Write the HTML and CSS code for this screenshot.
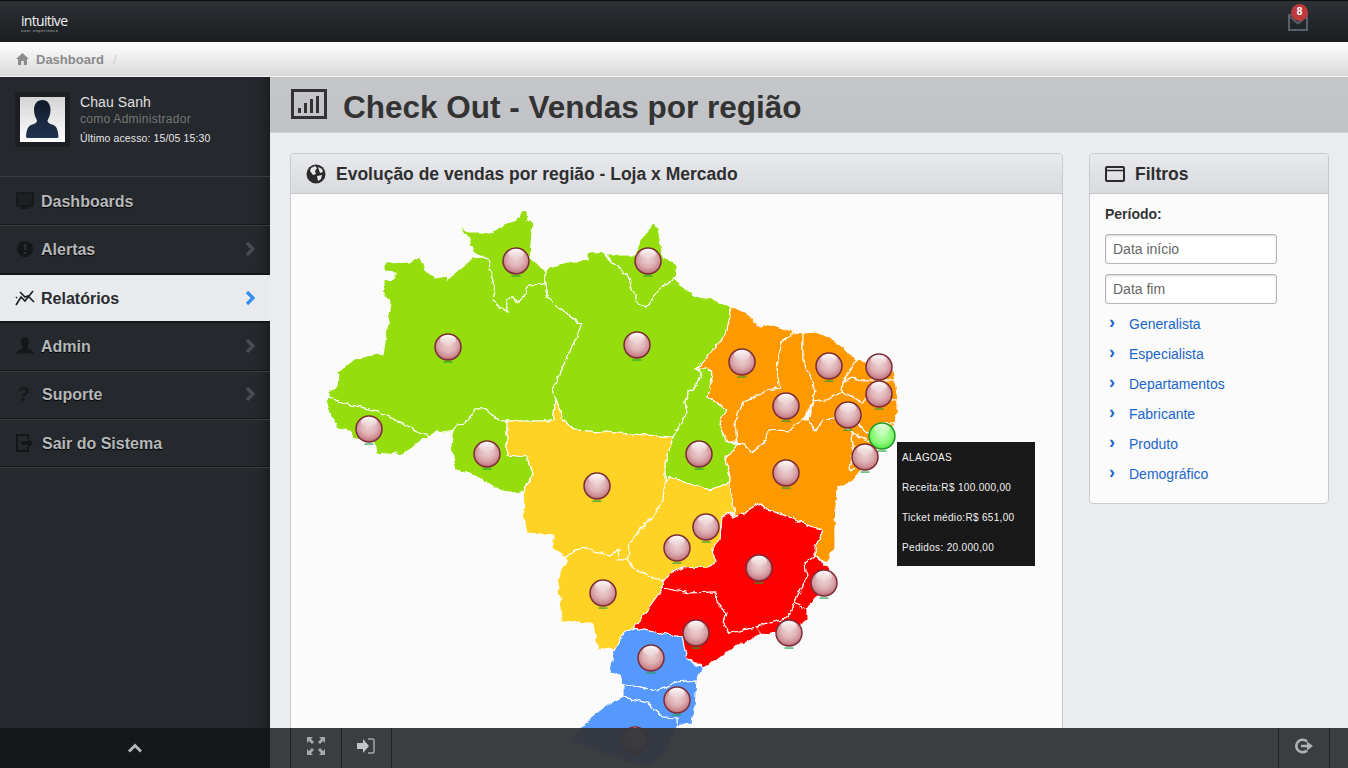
FILE: index.html
```html
<!DOCTYPE html>
<html lang="pt-BR">
<head>
<meta charset="utf-8">
<title>Check Out - Vendas por região</title>
<link rel="stylesheet" href="styles.css">
</head>
<body>
<svg class="defs" width="0" height="0" aria-hidden="true">
  <defs>
    <filter id="rough" x="-5%" y="-5%" width="110%" height="110%">
      <feTurbulence type="fractalNoise" baseFrequency=".14" numOctaves="2" seed="4" result="n"/>
      <feDisplacementMap in="SourceGraphic" in2="n" scale="5" xChannelSelector="R" yChannelSelector="G"/>
    </filter>
    <radialGradient id="ballRed" cx="50%" cy="40%" r="62%">
      <stop offset="0" stop-color="#ecd2d4"/>
      <stop offset=".5" stop-color="#dfb2b6"/>
      <stop offset=".82" stop-color="#cb868d"/>
      <stop offset="1" stop-color="#a84c56"/>
    </radialGradient>
    <radialGradient id="ballGreen" cx="50%" cy="42%" r="60%">
      <stop offset="0" stop-color="#c8ffc0"/>
      <stop offset=".6" stop-color="#8cfa78"/>
      <stop offset="1" stop-color="#4fe040"/>
    </radialGradient>
    <linearGradient id="gloss" x1="0" y1="0" x2="0" y2="1">
      <stop offset="0" stop-color="#fff" stop-opacity=".98"/>
      <stop offset="1" stop-color="#fff" stop-opacity=".05"/>
    </linearGradient>
    <linearGradient id="avatarBg" x1="0" y1="0" x2="0" y2="1">
      <stop offset="0" stop-color="#d4d4d4"/>
      <stop offset="1" stop-color="#ffffff"/>
    </linearGradient>
    <linearGradient id="bust" x1="0" y1="0" x2="0" y2="1">
      <stop offset="0" stop-color="#0f1a29"/>
      <stop offset="1" stop-color="#1f3350"/>
    </linearGradient>
    <g id="m">
      <rect x="-4.500" y="14.500" width="9" height="1.100" fill="#1f9e3a"/>
      <circle r="13" fill="url(#ballRed)" stroke="#7a2c38" stroke-width="1.500"/>
      <ellipse cy="-7" rx="8" ry="5.200" fill="url(#gloss)"/>
    </g>
    <g id="g">
      <rect x="-4.500" y="14.500" width="9" height="1.100" fill="#1f9e3a"/>
      <circle r="13" fill="url(#ballGreen)" stroke="#1f9a2a" stroke-width="1.500"/>
      <ellipse cy="-7" rx="8" ry="5.200" fill="url(#gloss)" opacity=".8"/>
    </g>
  </defs>
</svg>

<header class="topbar">
  <div class="logo">
    <span class="logo-name">intuitive</span>
    <span class="logo-sub">user experience</span>
  </div>
  <div class="mail">
    <svg class="mail-icon" width="20" height="17" viewBox="0 0 20 17"><path d="M1 1h18v15H1z M1 2l9 7.500 9-7.500" fill="none" stroke="#56616b" stroke-width="2"/></svg>
    <span class="badge">8</span>
  </div>
</header>

<nav class="crumbs">
  <svg width="13" height="12" viewBox="0 0 13 12"><path d="M6.500 0L0 6h2v6h3.200V8h2.600v4H11V6h2z" fill="#8b8b8b"/></svg>
  <span class="crumb">Dashboard</span>
  <span class="crumb-sep">/</span>
</nav>

<div class="shell">
  <aside class="sidebar">
    <div class="profile">
      <div class="avatar">
        <svg width="45" height="45" viewBox="0 0 45 45">
          <rect width="45" height="45" fill="url(#avatarBg)"/>
          <path d="M22.500 3c5 0 8 4 8 10 0 5-2 8-3 10.500 0 2.500 2.500 3.500 6 4.500 3.500 1.500 4.500 6 5 11.500 0 1-1 1.500-3 1.500H9c-2 0-3-.5-3-1.500.5-5.500 1.500-10 5-11.500 3.500-1 6-2 6-4.500-1-2.500-3-5.500-3-10.500 0-6 3-10 8.500-10z" fill="url(#bust)"/>
        </svg>
      </div>
      <div class="who">
        <div class="who-name">Chau Sanh</div>
        <div class="who-role">como Administrador</div>
        <div class="who-last">Último acesso: 15/05 15:30</div>
      </div>
    </div>
    <ul class="menu">
      <li class="item">
        <svg class="ico" width="18" height="18" viewBox="0 0 18 18"><path d="M1 1h16v13H1z" fill="#1d1f22" stroke="#141618" stroke-width="1.500"/><path d="M4 16h10" stroke="#17191b" stroke-width="2"/></svg>
        <span class="label">Dashboards</span>
      </li>
      <li class="item">
        <svg class="ico" width="18" height="18" viewBox="0 0 18 18"><circle cx="9" cy="9" r="8" fill="#141618"/><path d="M9 4v6M9 12v2" stroke="#2c2f32" stroke-width="2.500"/></svg>
        <span class="label">Alertas</span>
        <svg class="chev" width="11" height="16" viewBox="0 0 11 16"><path d="M2 2l6 6-6 6" fill="none" stroke="#4a4d51" stroke-width="3.200"/></svg>
      </li>
      <li class="item active">
        <svg class="ico" width="20" height="18" viewBox="0 0 20 18"><path d="M1 16l5-8 4 4 8-10M1 9l1-1M5 3l5 5 3-1 6 6" fill="none" stroke="#1d1f22" stroke-width="1.600"/></svg>
        <span class="label">Relatórios</span>
        <svg class="chev" width="11" height="16" viewBox="0 0 11 16"><path d="M2 2l6 6-6 6" fill="none" stroke="#2f8ff0" stroke-width="3.200"/></svg>
      </li>
      <li class="item">
        <svg class="ico" width="20" height="18" viewBox="0 0 20 18"><path d="M10 0c3 0 4 2.500 4 5 0 3-1.500 4.500-2 6 1 1.500 6 2 6.500 5.500H1.500C2 13 7 12.500 8 11c-.5-1.500-2-3-2-6 0-2.500 1-5 4-5z" fill="#141618"/></svg>
        <span class="label">Admin</span>
        <svg class="chev" width="11" height="16" viewBox="0 0 11 16"><path d="M2 2l6 6-6 6" fill="none" stroke="#4a4d51" stroke-width="3.200"/></svg>
      </li>
      <li class="item">
        <span class="ico ico-q">?</span>
        <span class="label label-shift">Suporte</span>
        <svg class="chev" width="11" height="16" viewBox="0 0 11 16"><path d="M2 2l6 6-6 6" fill="none" stroke="#4a4d51" stroke-width="3.200"/></svg>
      </li>
      <li class="item">
        <svg class="ico" width="18" height="18" viewBox="0 0 18 18"><path d="M12 5V1H1v16h11v-4" fill="none" stroke="#141618" stroke-width="2"/><path d="M5 7h7V4l5 5-5 5v-3H5z" fill="#141618"/></svg>
        <span class="label label-shift">Sair do Sistema</span>
      </li>
    </ul>
  </aside>

  <main class="main">
    <div class="title-band">
      <svg class="title-icon" width="36" height="30" viewBox="0 0 36 30"><rect x="1.500" y="1.500" width="33" height="27" fill="none" stroke="#333" stroke-width="3"/><path d="M7 19h3v5H7zM13 14h3v10h-3zM19 10h3v14h-3zM25 7h3v17h-3z" fill="#333"/></svg>
      <h1 class="title">Check Out - Vendas por região</h1>
    </div>
    <div class="content">
      <section class="panel panel-map">
        <div class="panel-head">
          <svg class="panel-icon" width="20" height="20" viewBox="0 0 20 20"><circle cx="10" cy="10" r="9.500" fill="#2b2b2b"/><path d="M5 4l4-2 2 2-2 3 1 3-3 1-3-4zM12 3l4 2 1 3-3 1zM11 12l5-1-1 4-3 2z" fill="#e8e8ea"/></svg>
          <h2 class="panel-title">Evolução de vendas por região - Loja x Mercado</h2>
        </div>
        <div class="stage">
          <svg class="map" width="771" height="574" viewBox="291 194 771 574">
            <g filter="url(#rough)">
            <g class="st-green">
              <polygon points="459,225 470,232 482,232 490,233 500,227 513,222 522,212 527,211 528,220 533,224 532,233 530,257 537,263 545,271 545,284 529,285 524,297 518,302 512,297 507,300 507,312 500,308 493,300 495,290 490,270 488,259 482,257 473,252 468,237"/>
              <polygon points="385,263 410,262 420,257 425,270 435,278 447,276 448,279 460,268 473,258 482,257 488,259 490,270 495,290 493,300 500,308 507,312 507,300 512,297 518,302 524,297 529,285 545,284 547,295 557,307 567,313 578,322 583,323 552,390 556,399 553,421 507,421 500,420 493,417 485,409 475,409 470,418 465,424 457,425 453,430 443,432 435,431 430,437 377,411 343,403 328,397 328,392 337,387 338,372 353,360 377,353 383,355 391,303 383,292 383,280 395,279 395,272 385,271"/>
              <polygon points="326,402 328,397 343,403 377,411 430,437 417,443 403,455 390,453 376,454 374,443 353,438 350,431 338,429 330,413"/>
              <polygon points="452,433 453,430 457,425 465,424 470,418 475,409 485,409 493,417 500,420 507,421 507,455 528,457 528,460 532,475 523,492 513,493 500,490 475,476 456,470 453,457 451,447"/>
              <polygon points="546,270 557,265 567,262 588,260 588,253 603,252 605,255 615,265 628,275 630,283 638,303 647,307 652,300 660,288 673,278 680,285 698,297 713,299 732,307 727,330 720,342 700,365 695,368 702,373 698,383 688,393 685,402 687,413 673,437 575,430 563,420 556,399 552,390 583,323 578,322 567,313 557,307 547,295 545,284"/>
              <polygon points="605,255 615,255 635,255 640,240 654,223 658,228 663,257 677,265 675,278 660,288 652,300 647,307 638,303 630,283 628,275 615,265"/>
              <polygon points="695,368 707,368 713,373 708,397 727,410 719,423 728,442 737,445 726,458 730,477 730,483 710,490 687,483 670,477 665,482 665,463 673,437 687,413 685,402 688,393 698,383 702,373"/>
            </g>
            <g class="st-yellow">
              <polygon points="507,421 553,421 556,399 563,420 575,430 673,437 665,463 665,482 663,500 652,518 640,530 630,542 628,560 618,560 620,550 610,555 600,553 587,548 575,550 565,558 553,548 553,535 527,533 523,518 525,503 522,495 532,475 528,460 528,457 507,455"/>
              <polygon points="670,477 687,483 710,490 730,483 735,515 727,512 722,517 720,540 713,548 715,563 707,567 683,568 670,573 663,582 633,568 628,560 630,542 640,530 652,518 663,500 665,482"/>
              <polygon points="565,558 575,550 587,548 600,553 610,555 620,550 618,560 628,560 633,568 663,582 660,592 647,610 633,628 623,633 615,652 610,648 598,650 593,625 580,622 562,622 560,597 557,592 560,573 567,560"/>
            </g>
            <g class="st-orange">
              <polygon points="732,307 747,313 760,327 770,324 795,332 782,342 778,360 777,373 780,388 768,390 743,403 735,422 737,442 728,442 719,423 727,410 708,397 713,373 707,368 695,368 700,365 720,342 727,330"/>
              <polygon points="795,332 803,333 803,360 815,390 812,403 803,420 787,432 768,430 767,440 752,453 742,443 737,442 735,422 743,403 768,390 780,388 777,373 778,360 782,342"/>
              <polygon points="803,333 817,332 833,340 847,350 857,360 843,382 842,400 827,400 813,402 815,390 803,360"/>
              <polygon points="857,360 893,370 895,380 863,380 850,378 843,382"/>
              <polygon points="843,382 850,378 863,380 895,380 898,400 865,400 862,403 853,397 842,392"/>
              <polygon points="813,402 827,400 842,392 853,397 862,403 865,400 898,400 898,407 895,423 882,423 868,433 858,425 837,417 823,420 815,432 808,420"/>
              <polygon points="852,433 837,417 858,425 868,433 882,423 895,423 888,434 880,445"/>
              <polygon points="852,433 880,445 868,462 850,470 853,450"/>
              <polygon points="737,445 742,443 752,453 767,440 768,430 787,432 803,420 808,420 815,432 823,420 837,417 852,433 853,450 850,470 868,462 850,483 837,488 835,527 835,547 827,563 815,557 815,547 823,530 807,525 793,518 767,510 760,503 743,513 733,518 735,515 730,483 730,477 726,458"/>
            </g>
            <g class="st-red">
              <polygon points="663,582 670,573 683,568 707,567 715,563 713,548 720,540 722,517 727,512 733,518 743,513 760,503 767,510 793,518 807,525 823,530 815,547 815,557 805,563 807,577 797,597 795,603 788,618 757,627 730,633 723,623 727,613 717,603 715,592 690,593 662,588"/>
              <polygon points="805,563 815,557 827,567 836,580 827,590 815,598 807,610 797,607 795,603 797,597 807,577"/>
              <polygon points="795,603 807,610 807,620 793,630 777,632 760,635 753,628 757,627 788,618"/>
              <polygon points="662,588 690,593 715,592 717,603 727,613 723,623 730,633 757,627 762,633 750,640 733,648 717,660 703,668 697,662 687,660 682,637 633,628 647,610 660,592"/>
            </g>
            <g class="st-blue">
              <polygon points="623,633 633,628 682,637 687,660 703,668 697,680 677,682 657,690 640,687 623,685 620,675 610,673 613,653"/>
              <polygon points="623,685 640,687 657,690 677,682 697,680 695,710 692,723 677,727 677,718 663,717 647,703 623,697"/>
              <polygon points="623,697 647,703 663,717 677,718 677,727 668,750 650,767 627,762 593,750 570,740 582,727 593,715 610,703"/>
            </g>
            </g>
            <use href="#m" x="516" y="261"/><use href="#m" x="648" y="261"/><use href="#m" x="448" y="347"/>
            <use href="#m" x="637" y="345"/><use href="#m" x="369" y="429"/><use href="#m" x="487" y="454"/>
            <use href="#m" x="742" y="362"/><use href="#m" x="829" y="366"/><use href="#m" x="879" y="367"/>
            <use href="#m" x="879" y="394"/><use href="#m" x="786" y="406"/><use href="#m" x="848" y="415"/>
            <use href="#g" x="882" y="436"/><use href="#m" x="865" y="457"/><use href="#m" x="699" y="454"/>
            <use href="#m" x="786" y="473"/><use href="#m" x="597" y="486"/><use href="#m" x="706" y="527"/>
            <use href="#m" x="677" y="548"/><use href="#m" x="759" y="568"/><use href="#m" x="824" y="583"/>
            <use href="#m" x="603" y="593"/><use href="#m" x="789" y="633"/><use href="#m" x="696" y="633"/>
            <use href="#m" x="651" y="658"/><use href="#m" x="677" y="700"/><use href="#m" x="635" y="740"/>
          </svg>
          <div class="tooltip">
            <p>ALAGOAS</p>
            <p>Receita:R$ 100.000,00</p>
            <p>Ticket médio:R$ 651,00</p>
            <p>Pedidos: 20.000,00</p>
          </div>
        </div>
      </section>

      <aside class="panel panel-filter">
        <div class="panel-head">
          <svg class="panel-icon" width="20" height="16" viewBox="0 0 20 16"><rect x="1" y="1" width="18" height="14" rx="1" fill="none" stroke="#2b2b2b" stroke-width="2"/><path d="M1 4.500h18" stroke="#2b2b2b" stroke-width="1.500"/></svg>
          <h2 class="panel-title">Filtros</h2>
        </div>
        <div class="filter-body">
          <div class="field-label">Período:</div>
          <input class="date" type="text" placeholder="Data início">
          <input class="date" type="text" placeholder="Data fim">
          <ul class="links">
            <li><span class="arrow">›</span><a href="#">Generalista</a></li>
            <li><span class="arrow">›</span><a href="#">Especialista</a></li>
            <li><span class="arrow">›</span><a href="#">Departamentos</a></li>
            <li><span class="arrow">›</span><a href="#">Fabricante</a></li>
            <li><span class="arrow">›</span><a href="#">Produto</a></li>
            <li><span class="arrow">›</span><a href="#">Demográfico</a></li>
          </ul>
        </div>
      </aside>
    </div>
  </main>
</div>

<footer class="footer">
  <div class="foot-left">
    <svg width="16" height="10" viewBox="0 0 16 10"><path d="M2 8.500l6-6 6 6" fill="none" stroke="#b4b6b8" stroke-width="3"/></svg>
  </div>
  <div class="foot-main">
    <div class="foot-spacer"></div>
    <div class="foot-btn">
      <svg width="18" height="18" viewBox="0 0 18 18" fill="#a6a8aa"><path d="M0 0h6L4 2l3 3-2 2-3-3-2 2zM18 0h-6l2 2-3 3 2 2 3-3 2 2zM0 18h6l-2-2 3-3-2-2-3 3-2-2zM18 18h-6l2-2-3-3 2-2 3 3 2-2z"/></svg>
    </div>
    <div class="foot-btn">
      <svg width="18" height="16" viewBox="0 0 18 16"><path d="M0 5h6V1l6 7-6 7v-4H0z" fill="#c2c4c6"/><path d="M11 1h5a1 1 0 0 1 1 1v12a1 1 0 0 1-1 1h-5" fill="none" stroke="#a6a8aa" stroke-width="1.500"/></svg>
    </div>
    <div class="foot-grow"></div>
    <div class="foot-btn foot-btn-end">
      <svg width="20" height="16" viewBox="0 0 20 16"><path d="M13 3.500A6.300 6.300 0 1 0 13 12.500" fill="none" stroke="#b0b2b4" stroke-width="2.600"/><path d="M7 6.700h6V3.500l6 4.500-6 4.500V9.300H7z" fill="#b0b2b4"/></svg>
    </div>
  </div>
</footer>
</body>
</html>
```

FILE: styles.css
```css
* { box-sizing: border-box; }
html, body { height: 100%; }
body {
  margin: 0;
  overflow: hidden;
  display: flex;
  flex-direction: column;
  font-family: "Liberation Sans", Arial, sans-serif;
  background: #ebecf0;
  color: #333;
}
ul { list-style: none; margin: 0; padding: 0; }
.defs { position: absolute; }

.topbar {
  flex: 0 0 42px;
  display: flex;
  align-items: center;
  justify-content: space-between;
  background: linear-gradient(#2c3135, #1b1e21);
  border-top: 1px solid #0c0d0e;
  padding: 0 40px 0 21px;
}
.logo { display: flex; flex-direction: column; line-height: 1; margin-top: 3px; }
.logo-name {
  font-family: "Open Sans", sans-serif;
  font-size: 14px;
  letter-spacing: -.7px;
  color: #f2f2f2;
}
.logo-sub {
  font-size: 4px;
  letter-spacing: .6px;
  color: #bbb;
  margin-top: 1px;
}
.mail { position: relative; width: 20px; height: 17px; margin-top: 2px; }
.mail-icon { display: block; }
.badge {
  position: absolute;
  top: -10px;
  left: 3px;
  width: 17px;
  height: 17px;
  border-radius: 50%;
  background: #bd3a3d;
  color: #fff;
  font-size: 10px;
  font-weight: bold;
  line-height: 16px;
  text-align: center;
}

.crumbs {
  flex: 0 0 35px;
  display: flex;
  align-items: center;
  padding-left: 16px;
  background: linear-gradient(#fbfbfb 10%, #d9d9d9);
  border-bottom: 1px solid #f2f2f2;
  font-size: 13px;
}
.crumb { font-weight: bold; color: #8a8a8a; margin-left: 7px; }
.crumb-sep { color: #ccc; margin-left: 9px; }

.shell { flex: 1; display: flex; min-height: 0; }

.sidebar {
  flex: 0 0 270px;
  background: #25282c;
  box-shadow: inset -12px 0 12px -10px #17191b;
}
.profile {
  height: 100px;
  display: flex;
  padding: 15px 0 0 15px;
  border-bottom: 1px solid #3a3d40;
}
.avatar {
  width: 55px;
  height: 55px;
  padding: 5px;
  background: #1c1e21;
  border-radius: 2px;
}
.avatar svg { display: block; }
.who { margin-left: 10px; }
.who-name { font-size: 14px; line-height: 20px; color: #e0e0e0; letter-spacing: .1px; }
.who-role { font-size: 12px; line-height: 15px; color: #767676; letter-spacing: .27px; }
.who-last { font-size: 10.5px; line-height: 16px; margin-top: 3px; color: #e6e6e6; letter-spacing: .12px; }

.item {
  height: 48.4px;
  display: flex;
  align-items: center;
  padding: 0 14px 0 15px;
  border-bottom: 1px solid #141618;
  box-shadow: 0 1px 0 #3a3d40;
  position: relative;
}
.ico { flex: 0 0 auto; width: 20px; }
.ico-q {
  font-size: 20px;
  font-weight: bold;
  color: #17191b;
  text-align: center;
  padding-right: 3px;
}
.label {
  margin-left: 6px;
  padding-top: 2px;
  font-size: 16px;
  font-weight: bold;
  color: #b6b7b9;
  text-shadow: 0 1px 1px #000;
}
.label-shift { margin-left: 7px; }
.chev { margin-left: auto; }
.item.active {
  background: #e9eaee;
  border-top: 1px solid #141618;
  border-bottom: 1px solid #141618;
  box-shadow: 0 1px 0 #141618, 0 -1px 0 #141618;
}
.item.active .label { color: #2a2c30; text-shadow: none; }

.main { flex: 1; min-width: 0; display: flex; flex-direction: column; }
.title-band {
  flex: 0 0 56px;
  display: flex;
  align-items: center;
  padding-left: 21px;
  background: linear-gradient(#c6c7ca, #c1c2c7);
  border-bottom: 1px solid #d2d3d7;
}
.title-icon { flex: 0 0 auto; margin-top: -2px; }
.title {
  margin: 5px 0 0 16px;
  font-size: 31.500px;
  font-weight: bold;
  color: #333;
  white-space: nowrap;
}

.content {
  flex: 1;
  min-height: 0;
  display: flex;
  align-items: flex-start;
  gap: 26px;
  padding: 20px 0 0 20px;
  overflow: hidden;
}
.panel {
  background: #fbfbfb;
  border: 1px solid #cacbcf;
  border-radius: 4px;
}
.panel-map { flex: 0 0 773px; height: 640px; }
.panel-filter { flex: 0 0 240px; height: 351px; }
.panel-head {
  height: 40px;
  display: flex;
  align-items: center;
  padding-left: 15px;
  background: linear-gradient(#e9eaed, #d9dadf);
  border-bottom: 1px solid #c6c7cb;
  border-radius: 3px 3px 0 0;
}
.panel-icon { flex: 0 0 auto; }
.panel-title {
  margin: 2px 0 0 10px;
  font-size: 17.500px;
  font-weight: bold;
  color: #2f2f2f;
  white-space: nowrap;
}

.stage { position: relative; height: 574px; }
.map { display: block; }
.st-green polygon, .st-yellow polygon, .st-orange polygon, .st-red polygon, .st-blue polygon {
  stroke: #fff;
  stroke-width: 1.100;
  stroke-linejoin: round;
}
.st-green { fill: #96dd0d; }
.st-yellow { fill: #ffd327; }
.st-orange { fill: #ff9900; }
.st-red { fill: #ff0000; }
.st-blue { fill: #5599ff; }

.tooltip {
  position: absolute;
  left: 606px;
  top: 248px;
  width: 138px;
  height: 124px;
  padding: 1px 5px 0;
  background: #191919;
  color: #f2f2f2;
  font-size: 10px;
  letter-spacing: .33px;
}
.tooltip p { margin: 0; height: 30px; line-height: 30px; white-space: nowrap; }

.filter-body { padding: 11px 15px 0; }
.field-label { font-size: 14px; font-weight: bold; line-height: 18px; color: #333; }
.date {
  display: block;
  width: 172px;
  height: 30px;
  margin-top: 10px;
  padding: 0 7px;
  border: 1px solid #b5b6bb;
  border-radius: 3px;
  background: #fff;
  box-shadow: inset 0 1px 2px #d5d5d5;
  font: 14px "Liberation Sans", Arial, sans-serif;
  color: #666;
}
.date::placeholder { color: #666; opacity: 1; }
.field-label + .date { margin-top: 11px; }
.links { margin-top: 5px; }
.links li { display: flex; align-items: center; height: 30px; font-size: 14px; }
.arrow {
  width: 24px;
  padding-left: 4px;
  margin-top: -3px;
  font-size: 18px;
  font-weight: bold;
  color: #1a66cc;
}
.links a { color: #1a66cc; text-decoration: none; }

.footer {
  position: fixed;
  left: 0;
  right: 0;
  bottom: 0;
  height: 40px;
  display: flex;
}
.foot-left {
  flex: 0 0 270px;
  display: flex;
  align-items: center;
  justify-content: center;
  background: #15171a;
}
.foot-main {
  flex: 1;
  display: flex;
  background: rgba(52, 53, 57, .96);
}
.foot-spacer { flex: 0 0 20px; }
.foot-btn {
  flex: 0 0 50.500px;
  display: flex;
  align-items: center;
  justify-content: center;
  padding-bottom: 4px;
  border-left: 1px solid #212225;
}
.foot-grow { flex: 1; border-left: 1px solid #212225; }
.foot-btn-end { flex-basis: 52px; border-right: 1px solid #212225; margin-right: 18px; }
```
